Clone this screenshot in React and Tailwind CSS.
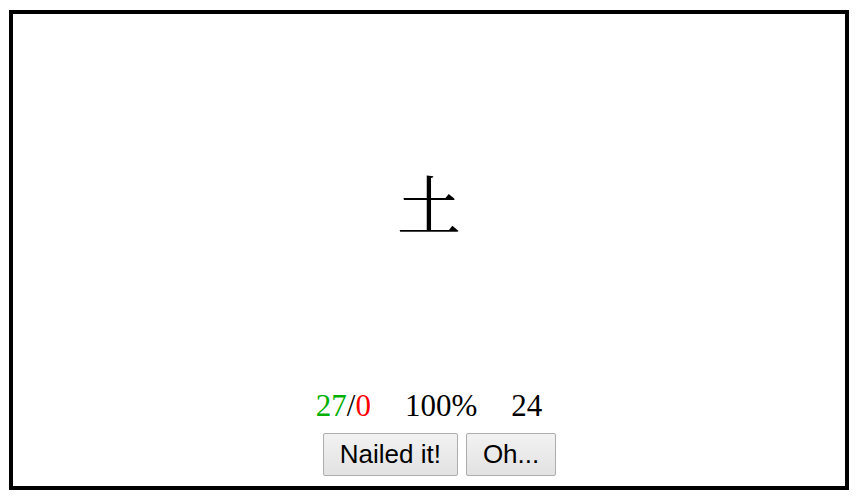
export default function App() {
  return (
    <div className="w-[859px] h-[499px] bg-white pt-[10px] pl-[9px]">
      <div className="w-[840px] h-[480px] border-4 border-black flex flex-col items-center pb-[10px]">
        {/* Current card */}
        <div className="flex-1 flex items-center justify-center">
          <span className="text-[64px] leading-none text-black font-['Noto_Serif_CJK_SC','Liberation_Serif','Noto_Sans_CJK_SC',serif]">
            土
          </span>
        </div>

        {/* Score line */}
        <div className="flex items-baseline gap-[34px] text-[31px] text-black font-['Liberation_Serif',serif] leading-[1.1]">
          <span>
            <span className="text-[#00b000]">27</span>/<span className="text-[#ff0000]">0</span>
          </span>
          <span>100%</span>
          <span>24</span>
        </div>

        {/* Actions */}
        <div className="flex gap-2 mt-[10px] pl-[21px] font-['Liberation_Sans',sans-serif]">
          <button className="h-[43px] px-4 text-[26px] text-black border border-[#adadad] rounded-[2px] bg-gradient-to-b from-[#f2f2f2] to-[#e2e2e2]">
            Nailed it!
          </button>
          <button className="h-[43px] px-4 text-[26px] text-black border border-[#adadad] rounded-[2px] bg-gradient-to-b from-[#f2f2f2] to-[#e2e2e2]">
            Oh...
          </button>
        </div>
      </div>
    </div>
  )
}
